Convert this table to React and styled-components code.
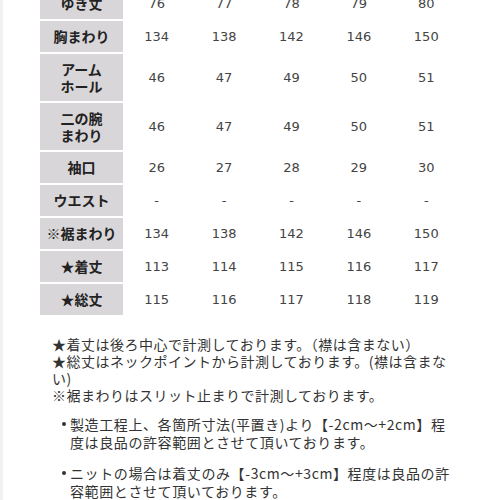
import React from 'react';
import styled, { createGlobalStyle } from 'styled-components';

const GlobalStyle = createGlobalStyle`
	html, body {
		margin: 0;
		padding: 0;
		background: #ffffff;
	}
	body {
		font-family: "Noto Sans CJK JP", "Noto Sans", sans-serif;
		color: #333;
		overflow: hidden;
	}
`;

const Page = styled.div`
	width: 500px;
	height: 500px;
	box-sizing: border-box;
	border-left: 3px solid #f1f1f1;
	overflow: hidden;
`;

const Table = styled.div`
	display: grid;
	grid-template-columns: 83px repeat(5, 67.4px);
	row-gap: 2px;
	margin: -12px 0 0 37px;
`;

const HeadCell = styled.div`
	height: ${({ $tall }) => ($tall ? '47px' : '31px')};
	background: #d9d6d9;
	display: flex;
	align-items: center;
	justify-content: center;
	text-align: center;
	font-family: "Noto Sans CJK JP", sans-serif;
	font-weight: 700;
	font-size: 14px;
	line-height: 17px;
	color: #222;
	white-space: pre-line;
`;

const Cell = styled.div`
	height: ${({ $tall }) => ($tall ? '47px' : '31px')};
	display: flex;
	align-items: center;
	justify-content: center;
	font-family: "DejaVu Sans", Verdana, sans-serif;
	font-size: 13px;
	color: #444;
`;

const Notes = styled.div`
	margin: 21px 0 0 49px;
	width: 398px;
	font-size: 14px;
	line-height: 17px;
	letter-spacing: 0.5px;
	color: #333;
`;

const List = styled.ul`
	list-style: none;
	margin: 11px 0 0 67px;
	padding: 0;
	width: 386px;
`;

const Item = styled.li`
	position: relative;
	font-size: 14px;
	line-height: 18px;
	letter-spacing: 0.6px;
	color: #333;
	margin-bottom: 13px;

	&::before {
		content: '';
		position: absolute;
		left: -8px;
		top: 7px;
		width: 4px;
		height: 4px;
		border-radius: 50%;
		background: #333;
	}
`;

const rows = [
	{ label: 'ゆき丈', values: ['76', '77', '78', '79', '80'] },
	{ label: '胸まわり', values: ['134', '138', '142', '146', '150'] },
	{ label: 'アーム\nホール', values: ['46', '47', '49', '50', '51'], tall: true },
	{ label: '二の腕\nまわり', values: ['46', '47', '49', '50', '51'], tall: true },
	{ label: '袖口', values: ['26', '27', '28', '29', '30'] },
	{ label: 'ウエスト', values: ['-', '-', '-', '-', '-'] },
	{ label: '※裾まわり', values: ['134', '138', '142', '146', '150'] },
	{ label: '★着丈', values: ['113', '114', '115', '116', '117'] },
	{ label: '★総丈', values: ['115', '116', '117', '118', '119'] },
];

export default function App() {
	return (
		<>
			<GlobalStyle />
			<Page>
				<Table>
					{rows.map((row) => (
						<React.Fragment key={row.label}>
							<HeadCell $tall={row.tall}>{row.label}</HeadCell>
							{row.values.map((v, i) => (
								<Cell key={i} $tall={row.tall}>{v}</Cell>
							))}
						</React.Fragment>
					))}
				</Table>
				<Notes>
					★着丈は後ろ中心で計測しております。（襟は含まない）<br />
					★総丈はネックポイントから計測しております。(襟は含まない)<br />
					※裾まわりはスリット止まりで計測しております。
				</Notes>
				<List>
					<Item>製造工程上、各箇所寸法(平置き)より【-2cm～+2cm】程度は良品の許容範囲とさせて頂いております。</Item>
					<Item>ニットの場合は着丈のみ【-3cm～+3cm】程度は良品の許容範囲とさせて頂いております。</Item>
				</List>
			</Page>
		</>
	);
}
